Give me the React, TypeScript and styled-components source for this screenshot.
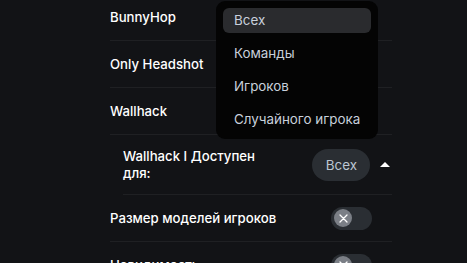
import React from 'react';
import styled, { createGlobalStyle } from 'styled-components';

const GlobalStyle = createGlobalStyle`
  html, body {
    margin: 0;
    padding: 0;
    background: #121316;
    overflow: hidden;
  }

  body {
    font-family: Inter, 'Noto Sans', sans-serif;
    -webkit-font-smoothing: antialiased;
  }
`;

const Page = styled.div`
  width: 467px;
  height: 263px;
  overflow: hidden;
  background: #121316;
`;

const List = styled.div`
  display: flex;
  flex-direction: column;
  width: 282px;
  margin: -6px 0 0 110px;
`;

const Row = styled.div<{ $indent?: boolean; $tall?: boolean }>`
  display: flex;
  align-items: center;
  justify-content: space-between;
  height: ${({ $tall }) => ($tall ? 59 : 46)}px;
  margin-left: ${({ $indent }) => ($indent ? 13 : 0)}px;
  border-bottom: 1px solid #1f2023;
`;

const Label = styled.div<{ $narrow?: boolean }>`
  color: #ffffff;
  font-size: 13.2px;
  font-weight: 500;
  line-height: 17px;
  max-width: ${({ $narrow }) => ($narrow ? '150px' : 'none')};
`;

const Control = styled.div`
  display: flex;
  align-items: center;
  gap: 10px;
`;

const PillWrap = styled.div`
  position: relative;
`;

const Pill = styled.div`
  display: flex;
  align-items: center;
  height: 32px;
  padding: 0 13px 0 14px;
  border-radius: 16px;
  background: #2a2e33;
  color: #bcc6d2;
  font-size: 13.4px;
  box-sizing: border-box;
`;

const Caret = styled.div`
  width: 0;
  height: 0;
  border-left: 5px solid transparent;
  border-right: 5px solid transparent;
  border-bottom: 5px solid #ffffff;
  margin-right: 2px;
`;

const Menu = styled.div`
  position: absolute;
  right: -8px;
  bottom: calc(100% + 10px);
  width: 162px;
  padding: 7px;
  box-sizing: border-box;
  display: flex;
  flex-direction: column;
  gap: 8px;
  background: #040404;
  border-radius: 9px;
  z-index: 5;
`;

const MenuItem = styled.div<{ $active?: boolean }>`
  display: flex;
  align-items: center;
  height: 25px;
  padding-left: 11px;
  border-radius: 6px;
  background: ${({ $active }) => ($active ? '#2a2b2e' : 'transparent')};
  color: #c8d0dc;
  font-size: 13.4px;
  white-space: nowrap;
`;

const Toggle = styled.div`
  display: flex;
  align-items: center;
  width: 41px;
  height: 23px;
  margin-right: 20px;
  padding: 0 3px;
  box-sizing: border-box;
  border-radius: 12px;
  background: #2a2e33;
`;

const Knob = styled.div`
  display: flex;
  align-items: center;
  justify-content: center;
  width: 18px;
  height: 18px;
  border-radius: 50%;
  background: #7b7f86;
`;

const CrossIcon = () => (
  <svg width='9' height='9' viewBox='0 0 9 9'>
    <path d='M1 1L8 8M8 1L1 8' stroke='#ffffff' strokeWidth='1.3' strokeLinecap='round' />
  </svg>
);

const SwitchOff = () => (
  <Toggle>
    <Knob>
      <CrossIcon />
    </Knob>
  </Toggle>
);

const options = ['Всех', 'Команды', 'Игроков', 'Случайного игрока'];

export default function App (): React.ReactElement {
  return (
    <Page>
      <GlobalStyle />
      <List>
        <Row>
          <Label>BunnyHop</Label>
        </Row>
        <Row>
          <Label>Only Headshot</Label>
        </Row>
        <Row>
          <Label>Wallhack</Label>
        </Row>
        <Row $indent $tall>
          <Label $narrow>Wallhack I Доступен для:</Label>
          <Control>
            <PillWrap>
              <Pill>Всех</Pill>
              <Menu>
                {options.map((o, i) => (
                  <MenuItem key={o} $active={i === 0}>{o}</MenuItem>
                ))}
              </Menu>
            </PillWrap>
            <Caret />
          </Control>
        </Row>
        <Row>
          <Label>Размер моделей игроков</Label>
          <SwitchOff />
        </Row>
        <Row>
          <Label>Невидимость</Label>
          <SwitchOff />
        </Row>
      </List>
    </Page>
  );
}
